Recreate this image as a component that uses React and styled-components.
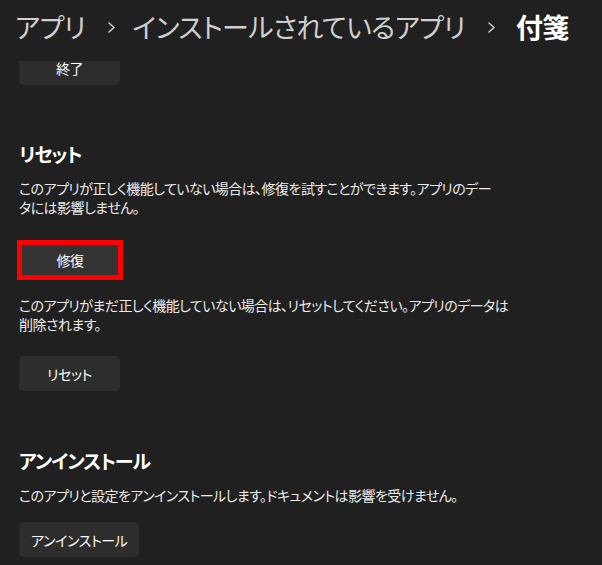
import React from 'react';
import styled, { createGlobalStyle } from 'styled-components';

const GlobalStyle = createGlobalStyle`
  html, body {
    margin: 0;
    background: #202020;
  }
  body {
    font-family: "Noto Sans CJK JP", "Noto Sans", sans-serif;
    font-feature-settings: "palt" 1;
    color: #fff;
    -webkit-font-smoothing: antialiased;
  }
`;

const Page = styled.div`
  width: 602px;
  height: 565px;
  display: flex;
  flex-direction: column;
  overflow: hidden;
  background: #202020;
`;

const Breadcrumb = styled.header`
  flex: none;
  height: 61px;
  box-sizing: border-box;
  padding: 7px 0 0 15px;
  display: flex;
  align-items: flex-start;
  font-size: 27px;
  letter-spacing: -0.6px;
  line-height: 40px;
  background: #202020;
  position: relative;
  z-index: 1;
`;

const Crumb = styled.span`
  color: ${({ $current }) => ($current ? '#ffffff' : '#cfcfcf')};
  font-weight: ${({ $current }) => ($current ? 700 : 400)};
  white-space: nowrap;
`;

const ChevronBox = styled.span`
  display: flex;
  align-items: center;
  height: 40px;
  margin: 0 ${({ $right }) => $right}px 0 ${({ $left }) => $left}px;
`;

const Viewport = styled.main`
  flex: 1;
  overflow: hidden;
  padding: 0 19px;
`;

const Content = styled.div`
  margin-top: -11px;
  display: flex;
  flex-direction: column;
  align-items: flex-start;
`;

const Section = styled.section`
  display: flex;
  flex-direction: column;
  align-items: flex-start;
  margin-top: ${({ $top }) => $top || 0}px;
`;

const Heading = styled.h2`
  margin: 0;
  font-size: 19px;
  letter-spacing: -1px;
  line-height: 28px;
  font-weight: 700;
  color: #ffffff;
`;

const Para = styled.p`
  margin: ${({ $top }) => $top}px 0 0;
  font-size: 14px;
  letter-spacing: -0.55px;
  line-height: 19px;
  color: #ececec;
`;

const Button = styled.button`
  margin-top: ${({ $top }) => $top || 0}px;
  min-width: 101px;
  height: 35px;
  padding: 0 12px;
  box-sizing: border-box;
  border: none;
  border-radius: 5px;
  background: #2d2d2d;
  color: #ffffff;
  font-family: inherit;
  font-feature-settings: "palt" 1;
  font-size: 14px;
  letter-spacing: -0.4px;
  cursor: pointer;
`;

const Highlight = styled.div`
  margin: ${({ $top }) => $top}px 0 0 -2px;
  border: 5px solid #ff0000;
  display: flex;

  ${Button} {
    min-width: 96px;
    height: 30px;
    border-radius: 0;
    background: #333333;
  }
`;

function Chevron({ left, right }) {
  return (
    <ChevronBox $left={left} $right={right}>
      <svg width="9" height="13" viewBox="0 0 9 13" fill="none">
        <path d="M2 2 L7 6.5 L2 11" stroke="#c8c8c8" strokeWidth="1.6" strokeLinecap="round" strokeLinejoin="round" />
      </svg>
    </ChevronBox>
  );
}

export default function App() {
  return (
    <Page>
      <GlobalStyle />
      <Breadcrumb>
        <Crumb>アプリ</Crumb>
        <Chevron left={22} right={16} />
        <Crumb>インストールされているアプリ</Crumb>
        <Chevron left={22} right={20} />
        <Crumb $current>付箋</Crumb>
      </Breadcrumb>
      <Viewport>
        <Content>
          <Button>終了</Button>

          <Section $top={55}>
            <Heading>リセット</Heading>
            <Para $top={11}>
              このアプリが正しく機能していない場合は、修復を試すことができます。アプリのデー
              <br />
              タには影響しません。
            </Para>
            <Highlight $top={23}>
              <Button>修復</Button>
            </Highlight>
            <Para $top={16}>
              このアプリがまだ正しく機能していない場合は、リセットしてください。アプリのデータは
              <br />
              削除されます。
            </Para>
            <Button $top={22}>リセット</Button>
          </Section>

          <Section $top={56}>
            <Heading>アンインストール</Heading>
            <Para $top={11}>このアプリと設定をアンインストールします。ドキュメントは影響を受けません。</Para>
            <Button $top={17}>アンインストール</Button>
          </Section>
        </Content>
      </Viewport>
    </Page>
  );
}
